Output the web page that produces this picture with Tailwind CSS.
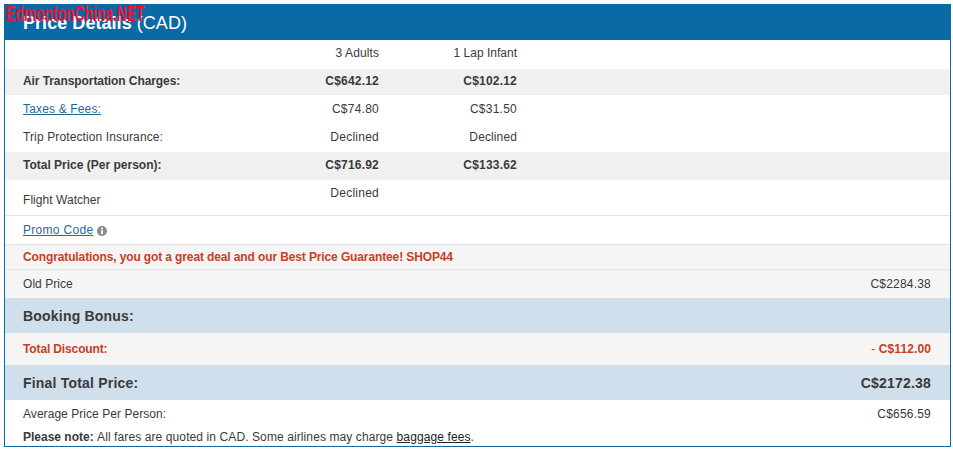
<!DOCTYPE html>
<html lang="en">
<head>
    <meta charset="UTF-8">
    <title>Price Details</title>
    <script src="https://cdn.jsdelivr.net/npm/@tailwindcss/browser@4"></script>
</head>
<body class="bg-white font-['Liberation_Sans',Arial,sans-serif] text-[12px] text-[#3a3a3a] w-[953px] h-[449px] overflow-hidden relative">

    <!-- watermark -->
    <div class="absolute left-[6px] top-[2px] text-[#ee1133] font-bold text-[22px] leading-[24px] whitespace-nowrap origin-left scale-x-[0.63] z-10">EdmontonChina.NET</div>

    <div class="ml-[4px] mt-[4px] w-[947px] h-[443px] border border-[#0a6aa6] flex flex-col">
        <div class="h-[35px] shrink-0 bg-[#0a6aa6] text-white text-[18px] pl-[18px] leading-[36px] tracking-[0.05px]"><b>Price Details</b> (CAD)</div>

        <!-- fare breakdown -->
        <div class="h-[29px] flex items-center pb-[3px] pl-[18px] pr-[19px]">
            <div class="w-[250px]"></div>
            <div class="w-[106px] text-right tracking-[0.1px]">3 Adults</div>
            <div class="w-[138px] text-right">1 Lap Infant</div>
        </div>
        <div class="h-[26px] flex items-center pb-[3px] pl-[18px] pr-[19px] bg-[#f0f0f0] font-bold">
            <div class="w-[250px] tracking-[-0.08px]">Air Transportation Charges:</div>
            <div class="w-[106px] text-right tracking-[0.2px]">C$642.12</div>
            <div class="w-[138px] text-right tracking-[0.2px]">C$102.12</div>
        </div>
        <div class="h-[28px] flex items-center pl-[18px] pr-[19px]">
            <div class="w-[250px]"><a class="text-[#1f6a94] underline tracking-[0.16px]">Taxes &amp; Fees:</a></div>
            <div class="w-[106px] text-right tracking-[0.25px]">C$74.80</div>
            <div class="w-[138px] text-right tracking-[0.25px]">C$31.50</div>
        </div>
        <div class="h-[29px] flex items-center pb-[1px] pl-[18px] pr-[19px]">
            <div class="w-[250px] tracking-[0.12px]">Trip Protection Insurance:</div>
            <div class="w-[106px] text-right tracking-[0.25px]">Declined</div>
            <div class="w-[138px] text-right tracking-[0.12px]">Declined</div>
        </div>
        <div class="h-[28px] flex items-center pb-[2px] pl-[18px] pr-[19px] bg-[#f0f0f0] font-bold">
            <div class="w-[250px]">Total Price (Per person):</div>
            <div class="w-[106px] text-right tracking-[0.2px]">C$716.92</div>
            <div class="w-[138px] text-right tracking-[0.2px]">C$133.62</div>
        </div>
        <div class="h-[36px] flex pl-[18px] pr-[19px] border-b border-[#e4e4e4]">
            <div class="w-[250px] pt-[11px] tracking-[0.05px]">Flight Watcher</div>
            <div class="w-[106px] text-right pt-[4px] tracking-[0.25px]">Declined</div>
        </div>

        <div class="h-[29px] flex items-center gap-[4px] pl-[18px] border-b border-[#e4e4e4]">
            <a class="text-[#1f6a94] underline tracking-[0.3px]">Promo Code</a>
            <svg width="10" height="10" viewBox="0 0 10 10" class="mt-[1px]"><circle cx="5" cy="5" r="5" fill="#8a8a8a"/><rect x="4.1" y="4.2" width="1.9" height="3.9" fill="#fff"/><rect x="4.1" y="1.8" width="1.9" height="1.6" fill="#fff"/></svg>
        </div>
        <div class="h-[25px] flex items-center pl-[18px] bg-[#f5f5f5] border-b border-[#e4e4e4] text-[#c8401e] font-bold tracking-[-0.12px]">Congratulations, you got a great deal and our Best Price Guarantee! SHOP44</div>
        <div class="h-[28px] flex items-center justify-between pl-[18px] pr-[19px] bg-[#f5f5f5]">
            <span class="tracking-[0.05px]">Old Price</span><span class="tracking-[0.2px]">C$2284.38</span>
        </div>
        <div class="h-[35px] flex items-center pt-[2px] pl-[18px] bg-[#cfdfeb] font-bold text-[14px] tracking-[0.2px]">Booking Bonus:</div>
        <div class="h-[32px] flex items-center justify-between pl-[18px] pr-[19px] bg-[#f5f5f5] text-[#c8401e] font-bold">
            <span class="tracking-[-0.13px]">Total Discount:</span><span class="tracking-[0.1px]"><span class="font-normal">- </span>C$112.00</span>
        </div>
        <div class="h-[35px] flex items-center justify-between pt-[2px] pl-[18px] pr-[19px] bg-[#cfdfeb] font-bold text-[14px] tracking-[0.2px]">
            <span>Final Total Price:</span><span>C$2172.38</span>
        </div>
        <div class="h-[28px] flex items-center justify-between pl-[18px] pr-[19px]">
            <span class="tracking-[0.05px]">Average Price Per Person:</span><span class="tracking-[0.2px]">C$656.59</span>
        </div>
        <div class="pl-[18px] pt-[1px] leading-[16px]"><b>Please note:</b> <span class="tracking-[0.1px]">All fares are quoted in CAD. Some airlines may charge <a class="underline text-[#222]">baggage fees</a>.</span></div>
    </div>
</body>
</html>
